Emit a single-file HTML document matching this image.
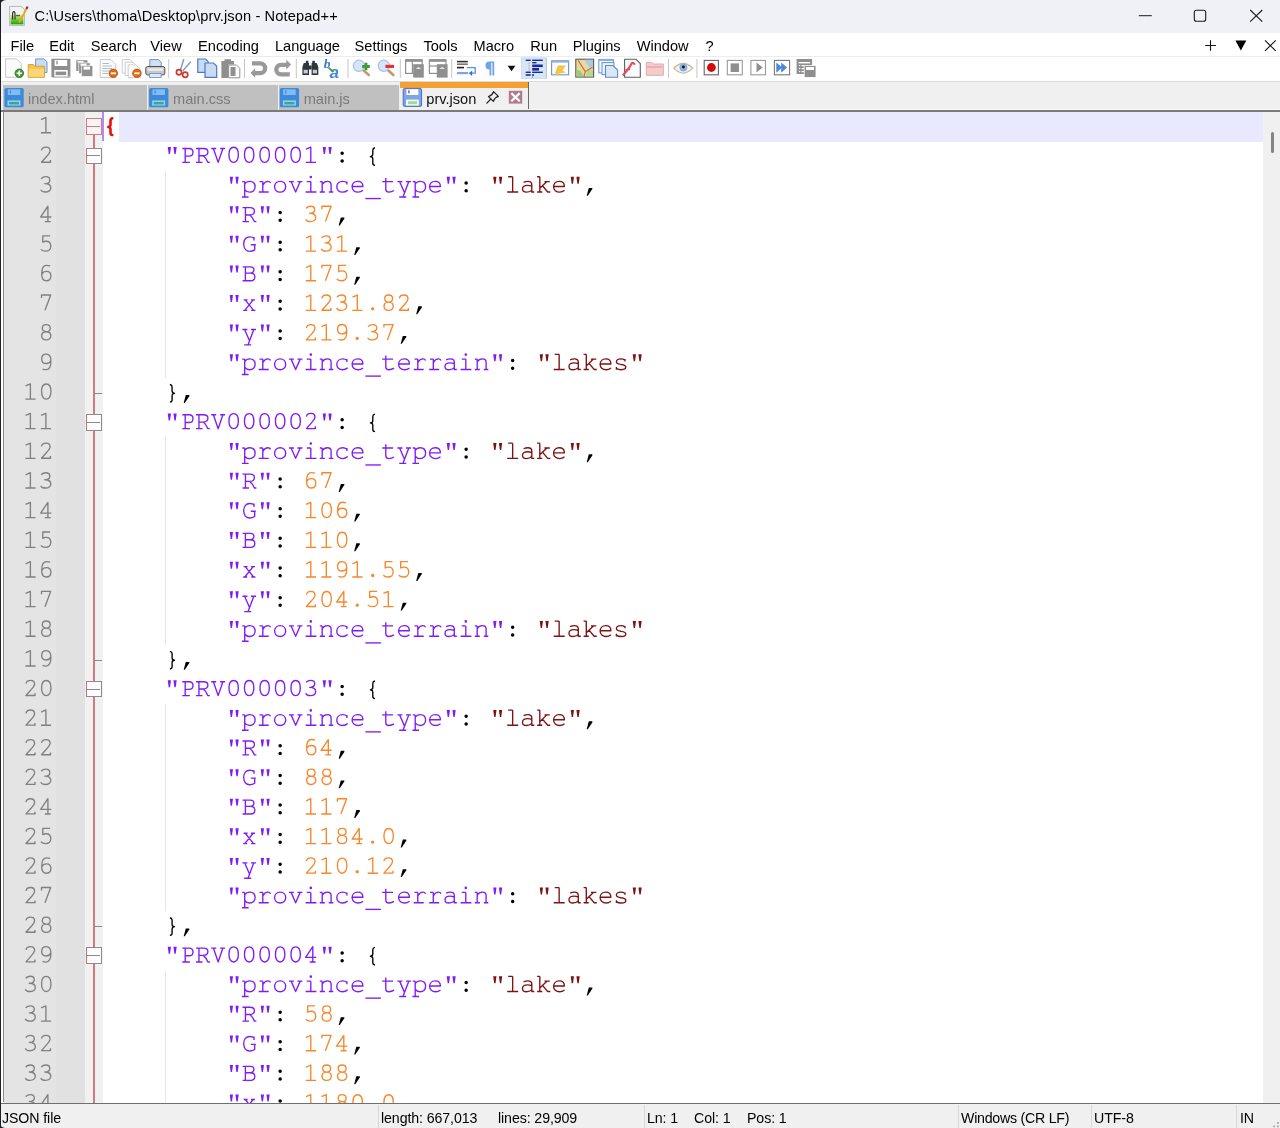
<!DOCTYPE html>
<html><head><meta charset="utf-8">
<style>
html,body{margin:0;padding:0;width:1280px;height:1128px;overflow:hidden;background:#fff;}
body{position:relative;font-family:"Liberation Sans",sans-serif;}
.a{position:absolute;}
#title{left:0;top:0;width:1280px;height:32.6px;background:#eff1f6;border-top-left-radius:6px;}
#ttext{filter:blur(0.25px);left:34.5px;top:8.2px;font-size:14.6px;letter-spacing:0.12px;color:#000;white-space:nowrap;}
#menubar{left:0;top:33px;width:1280px;height:24px;background:#fff;}
.mi{position:absolute;filter:blur(0.25px);top:38px;font-size:14.6px;color:#000;white-space:nowrap;}
#toolbar{left:0;top:57px;width:1280px;height:24px;background:#fff;}
#tabbar{left:0;top:81px;width:1280px;height:30px;background:#f0f0f0;}
.tab{position:absolute;top:85px;height:25px;background:#c0c0c0;}
.tt{position:absolute;filter:blur(0.25px);top:91px;font-size:14.6px;color:#7a7a7a;white-space:nowrap;}
#edtop{left:0;top:110px;width:1280px;height:2px;background:#7a7a7a;}
#editor{left:0;top:112px;width:1263px;height:991px;background:#fff;overflow:hidden;}
#lnm{left:3.7px;top:112px;width:52px;height:991px;background:#e4e4e4;}
#sym{left:55.7px;top:112px;width:30px;height:991px;background:#e1e1e1;}
#fold{left:85px;top:112px;width:17.5px;height:991px;background:#f1f1f1;}
#curline{left:118.5px;top:112px;width:1144.5px;height:29.5px;background:#e8e8ff;}
#scroll{left:1263px;top:112px;width:17px;height:991px;background:#f0f0f0;}
#edbot{left:0;top:1102.6px;width:1280px;height:1.4px;background:#707070;}
#status{left:0;top:1104px;width:1280px;height:24px;background:#f0f0f0;border-bottom-left-radius:5px;}
.st{position:absolute;filter:blur(0.25px);top:1110px;font-size:14.2px;color:#000;letter-spacing:-0.1px;white-space:nowrap;}
#lborder{left:0;top:0;width:1.3px;height:1128px;background:#1e2226;}


</style></head><body>
<div class="a" style="left:0;top:0;width:8px;height:8px;background:#1e2226"></div>
<div class="a" id="title"></div>
<div class="a" id="ttext">C:\Users\thoma\Desktop\prv.json - Notepad++</div>
<div class="a" id="menubar"></div>
<div class="mi" style="left:10.5px">File</div><div class="mi" style="left:49.2px">Edit</div><div class="mi" style="left:90.7px">Search</div><div class="mi" style="left:150.3px">View</div><div class="mi" style="left:198.1px">Encoding</div><div class="mi" style="left:275.0px">Language</div><div class="mi" style="left:354.6px">Settings</div><div class="mi" style="left:423.4px">Tools</div><div class="mi" style="left:473.5px">Macro</div><div class="mi" style="left:530.3px">Run</div><div class="mi" style="left:572.7px">Plugins</div><div class="mi" style="left:636.7px">Window</div><div class="mi" style="left:705.6px">?</div>
<div class="a" id="toolbar"></div>
<div class="a" id="tabbar"></div>
<div class="a" style="left:0;top:80.6px;width:1280px;height:1px;background:#dadada"></div>
<div class="a" style="left:0;top:56px;width:1280px;height:1px;background:#ececec"></div>
<div class="tab" style="left:3px;width:143.5px"></div>
<div class="tab" style="left:148px;width:129.5px"></div>
<div class="tab" style="left:278.5px;width:120.5px"></div>
<div class="tt" style="left:28px">index.html</div>
<div class="tt" style="left:173px">main.css</div>
<div class="tt" style="left:303.7px">main.js</div>
<div class="a" style="left:400px;top:82px;width:128px;height:28px;background:#f0f0f0;"></div>
<div class="a" style="left:400px;top:82px;width:128px;height:5.6px;background:#f5a033;"></div>
<div class="a" style="left:528px;top:82px;width:1px;height:28px;background:#696969;"></div>
<div class="tt" style="left:426.3px;color:#111">prv.json</div>
<svg class="a" style="left:0;top:0;filter:blur(0.3px)" width="1280" height="112" viewBox="0 0 1280 112">
<!-- app icon -->
<defs><linearGradient id="appg" x1="0" y1="0" x2="0" y2="1"><stop offset="0" stop-color="#d8f0a0"/><stop offset="0.45" stop-color="#80d040"/><stop offset="1" stop-color="#20a010"/></linearGradient></defs>
<path d="M9.6,6.4 H21.4 L24.4,9.4 V25.4 H9.6 Z" fill="#f2f4f2" stroke="#b4b8b4" stroke-width="1"/>
<rect x="10.6" y="14.5" width="12.8" height="9.9" fill="url(#appg)"/>
<path d="M12.6,19.5 V14 Q12.6,11.6 13.8,11.6 Q15,11.6 15,14 V19.5" fill="none" stroke="#2a2a2a" stroke-width="1.1"/>
<circle cx="17" cy="15.6" r="0.8" fill="#2a2a2a"/><circle cx="19" cy="15.6" r="0.8" fill="#2a2a2a"/>
<path d="M19.2,22.6 L27.2,7.4" stroke="#e8a818" stroke-width="2"/>
<path d="M26.4,8.9 L27.6,6.6" stroke="#8a4040" stroke-width="2.1"/>
<!-- 1 new -->
<path d="M5.6,58.8 H16.6 L21.3,63.5 V77.3 H5.6 Z" fill="#fbfbfb" stroke="#c9c9c9" stroke-width="1"/>
<circle cx="19.3" cy="73.3" r="4.3" fill="#3f9a32" stroke="#2e6e26" stroke-width="0.8"/>
<path d="M19.3,70.6 V76 M16.6,73.3 H22" stroke="#fff" stroke-width="1.6"/>
<!-- 2 open -->
<path d="M35.6,58.9 H44 L47,61.9 V72.5 H35.6 Z" fill="#c9dcf6" stroke="#7196cc" stroke-width="1"/>
<path d="M28.2,64.6 H33.4 L34.8,66.2 H44.4 V77.3 H28.2 Z" fill="#f7c451" stroke="#d8a238" stroke-width="1"/>
<path d="M28.7,68.8 H44 V76.8 H28.7 Z" fill="#fcd676"/>
<!-- 3 save -->
<path d="M51.4,58.8 H70.4 V77.4 H52.6 L51.4,76.2 Z" fill="#8e8e8e"/>
<rect x="54.6" y="60" width="12.6" height="6" fill="#fff"/>
<rect x="56.3" y="60.9" width="1.3" height="3.5" fill="#8e8e8e"/>
<rect x="54.3" y="70" width="13.4" height="6.6" fill="#fff"/>
<rect x="55.6" y="71.6" width="10.6" height="3.5" fill="#8e8e8e"/>
<rect x="68.6" y="75.8" width="0.9" height="0.9" fill="#fff"/>
<!-- 4 save all -->
<rect x="76.2" y="60.2" width="11.3" height="10.8" fill="#929292"/>
<rect x="78.8" y="62.9" width="11.3" height="10.8" fill="#929292" stroke="#fff" stroke-width="0.6"/>
<rect x="81.5" y="65.6" width="11.3" height="10.8" fill="#929292" stroke="#fff" stroke-width="0.6"/>
<rect x="77.5" y="61" width="6" height="1.5" fill="#fff"/>
<rect x="80.5" y="63.6" width="6" height="2" fill="#fff"/>
<rect x="83.5" y="66.6" width="6.5" height="3" fill="#fff"/>
<!-- 5 close -->
<path d="M100.2,59.6 H111 L115.8,64.4 V77.4 H100.2 Z" fill="#fcfcfc" stroke="#c9c9c9" stroke-width="1"/>
<path d="M102.5,63.5 H109 M102.5,66 H112 M102.5,68.5 H112 M102.5,71 H110 M102.5,73.5 H108" stroke="#9fb3c8" stroke-width="0.9"/>
<circle cx="113.3" cy="73.3" r="4.3" fill="#e26a12" stroke="#b04a0c" stroke-width="0.7"/>
<path d="M110.7,73.3 H115.9" stroke="#fff" stroke-width="1.8"/>
<!-- 6 close all -->
<path d="M122.2,59.5 H130 L132.5,62 V73 H122.2 Z" fill="#fdfdfd" stroke="#c9c9c9" stroke-width="0.9"/>
<path d="M125.2,62.2 H133 L135.5,64.7 V75.5 H125.2 Z" fill="#fdfdfd" stroke="#c9c9c9" stroke-width="0.9"/>
<path d="M128.2,64.9 H136 L140.6,69.5 V77.5 H128.2 Z" fill="#fdfdfd" stroke="#c9c9c9" stroke-width="0.9"/>
<circle cx="136.9" cy="73.3" r="4.3" fill="#e26a12" stroke="#b04a0c" stroke-width="0.7"/>
<path d="M134.3,73.3 H139.5" stroke="#fff" stroke-width="1.8"/>
<!-- 7 print -->
<path d="M149.8,59.6 H158.5 L161.2,62.3 V67 H149.8 Z" fill="#cfe0f6" stroke="#7196cc" stroke-width="1"/>
<rect x="145.8" y="66.5" width="19" height="8.5" rx="2" fill="#c9c9c9" stroke="#4f4f4f" stroke-width="1"/>
<rect x="147.5" y="68.5" width="15.6" height="2.2" fill="#eeeeee"/>
<rect x="149.5" y="73.5" width="11.6" height="4" fill="#dfe9f6" stroke="#7196cc" stroke-width="0.9"/>
<!-- separators -->
<g fill="#c6c6c6">
<rect x="168.2" y="59" width="1" height="19"/>
<rect x="244" y="59" width="1" height="19"/>
<rect x="295.8" y="59" width="1" height="19"/>
<rect x="347.5" y="59" width="1" height="19"/>
<rect x="399.8" y="59" width="1" height="19"/>
<rect x="451.2" y="59" width="1" height="19"/>
<rect x="668" y="59" width="1" height="19"/>
<rect x="696.4" y="59" width="1" height="19"/>
</g>
<!-- 8 cut -->
<path d="M180.6,69.5 L183.8,59" stroke="#8aa2c4" stroke-width="1.6"/>
<path d="M182.8,70.8 L190.8,61.8" stroke="#8aa2c4" stroke-width="1.6"/>
<circle cx="179" cy="72.2" r="2.6" fill="none" stroke="#cf3a30" stroke-width="1.7"/>
<circle cx="185.2" cy="74.8" r="2.6" fill="none" stroke="#cf3a30" stroke-width="1.7"/>
<!-- 9 copy -->
<path d="M197.8,59 H205.5 L208.2,61.7 V72.3 H197.8 Z" fill="#cadcf5" stroke="#4e78c2" stroke-width="1.2"/>
<path d="M205,63 H213.5 L216.7,66.2 V77.3 H205 Z" fill="#cadcf5" stroke="#4e78c2" stroke-width="1.2"/>
<!-- 10 paste -->
<path d="M221.4,61 H224.5 V59.2 H231 V61 H234 V64.5 H228.4 V78 H221.4 Z" fill="#8f8f8f"/>
<path d="M228.6,65 H236.5 L239.8,68.3 V77.8 H228.6 Z" fill="#fff" stroke="#8f8f8f" stroke-width="1"/>
<rect x="230.5" y="67" width="5" height="9" fill="#8f8f8f"/>
<!-- 11 undo -->
<path d="M251.9,63.35 H260.25 A4.85,4.85 0 0 1 260.25,73.05 H254" fill="none" stroke="#999" stroke-width="4.3"/>
<path d="M250.5,73.1 L255.2,68.3 V77.7 Z" fill="#999"/>
<!-- 12 redo -->
<path d="M289.8,74.35 H281.05 A4.75,4.75 0 0 1 281.05,64.85 H287.2" fill="none" stroke="#999" stroke-width="4.3"/>
<path d="M291.1,64.6 L286.3,59.8 V69.4 Z" fill="#999"/>
<!-- 13 find -->
<path d="M303.8,63 H309 V75 H302.4 V67 Z M311.6,63 H316.8 L318.3,67 V75 H311.6 Z" fill="#2e3640"/>
<rect x="305.8" y="60.8" width="2.6" height="3" fill="#2e3640"/><rect x="312.3" y="60.8" width="2.6" height="3" fill="#2e3640"/>
<rect x="309" y="65.5" width="2.6" height="4" fill="#2e3640"/>
<rect x="303.6" y="69.8" width="4.2" height="3.6" fill="#c8ccd2"/><rect x="312.8" y="69.8" width="4.2" height="3.6" fill="#c8ccd2"/>
<!-- 14 replace -->
<text x="323.8" y="68.2" font-family="Liberation Serif" font-style="italic" font-weight="bold" font-size="13.5" fill="#3a78d4">b</text>
<text x="329.6" y="77.6" font-family="Liberation Sans" font-style="italic" font-weight="bold" font-size="17" fill="#4a88e0">a</text>
<path d="M328.6,67.6 L333.4,72.2" stroke="#38a040" stroke-width="1.8"/>
<!-- 15 zoom in -->
<path d="M362.5,69.5 L368.8,75" stroke="#c9976a" stroke-width="2.6" stroke-linecap="round"/>
<circle cx="359" cy="65.8" r="5.6" fill="#d6e6f8" stroke="#a9c2e4" stroke-width="1.2"/>
<path d="M366,62.7 V70.3 M362.2,66.5 H369.8" stroke="#3f9a3a" stroke-width="2.8"/>
<!-- 16 zoom out -->
<path d="M387.3,69.5 L393.3,75" stroke="#c9976a" stroke-width="2.6" stroke-linecap="round"/>
<circle cx="383.8" cy="65.8" r="5.6" fill="#d6e6f8" stroke="#a9c2e4" stroke-width="1.2"/>
<rect x="385.4" y="64.8" width="8.6" height="3.2" fill="#e0323e"/>
<!-- 17 sync v -->
<rect x="405.6" y="59.8" width="16.6" height="13.6" fill="#fff" stroke="#8f8f8f" stroke-width="1.2"/>
<rect x="405.6" y="59.4" width="16.6" height="2.4" fill="#8f8f8f"/>
<rect x="411.8" y="60" width="1.2" height="13" fill="#8f8f8f"/>
<rect x="413.2" y="64.2" width="10.6" height="13.4" fill="#8f8f8f"/>
<path d="M415.8,68.8 Q418.5,65.8 421.2,68.8 Z" fill="#fff"/>
<!-- 18 sync h -->
<rect x="429.4" y="59.8" width="16.6" height="13.6" fill="#fff" stroke="#8f8f8f" stroke-width="1.2"/>
<rect x="429.4" y="59.4" width="16.6" height="2.4" fill="#8f8f8f"/>
<rect x="430" y="65.4" width="16" height="1.2" fill="#8f8f8f"/>
<rect x="436.8" y="64.2" width="10.8" height="13.4" fill="#8f8f8f"/>
<path d="M439.5,68.8 Q442.2,65.8 444.9,68.8 Z" fill="#fff"/>
<!-- 19 wrap -->
<rect x="457" y="60.8" width="10.8" height="1.6" fill="#333"/>
<rect x="457" y="63.4" width="10.8" height="1.6" fill="#777"/>
<rect x="457" y="66.8" width="7" height="1.6" fill="#222"/>
<rect x="457" y="72" width="11" height="2.2" fill="#7aa6e6"/>
<path d="M467,67.6 H475.2 V73.2 H471" fill="none" stroke="#5b8fd8" stroke-width="1.3"/>
<path d="M468.6,73.2 L472.2,70.4 V76 Z" fill="#3a74cc"/>
<!-- 20 pilcrow -->
<path d="M489.5,61.4 H494.2 V75.6 H492.4 V63 H491.3 V75.6 H489.5 V69.5 A4,4 0 0 1 489.5,61.4 Z" fill="#6ea4e8"/>
<!-- 21 dropdown -->
<path d="M507.6,65.8 H515.4 L511.5,71.2 Z" fill="#111"/>
<!-- 22 indent guide pressed -->
<rect x="521.3" y="57.8" width="24.8" height="20.8" fill="#d6e7fa" stroke="#c2d8f2" stroke-width="0.8"/>
<rect x="546" y="58.5" width="1" height="19.5" fill="#c6c6c6"/>
<g fill="#1c2aa0">
<rect x="525.7" y="59.6" width="5" height="1.4"/><rect x="532.2" y="59.6" width="10.6" height="1.4"/>
<rect x="532.2" y="62" width="4.3" height="1.4"/>
<rect x="532.2" y="64.5" width="10.6" height="2.6"/>
<rect x="532.2" y="68" width="6.8" height="2.6"/>
<rect x="525.7" y="71.6" width="5" height="1.4"/><rect x="532.2" y="71.6" width="10.6" height="1.4"/>
<rect x="525.7" y="74.2" width="5" height="1.6"/><rect x="532.2" y="74.2" width="1.8" height="1.6"/>
<rect x="532.2" y="76.6" width="0.9" height="0.9"/>
</g>
<path d="M529,62.5 V71" stroke="#d08080" stroke-width="1" stroke-dasharray="1.2,1.2"/>
<!-- 23 next -->
<rect x="551.6" y="60.8" width="17" height="14" fill="#fafcff" stroke="#6c92cc" stroke-width="1.1"/>
<rect x="551.6" y="60.6" width="17" height="2" fill="#8fb0e0"/>
<path d="M555,73 L558,65.5 H566 L562.5,70.5 L566,72.5 L559,73.5 L557.5,76 Z" fill="#f2c640"/>
<!-- 24 doc map -->
<rect x="575.8" y="59.2" width="17.8" height="17.9" fill="#e4dc9c" stroke="#5a5a5a" stroke-width="1.1"/>
<path d="M584.5,59.8 H593 V69 L589,67 Z" fill="#a9c9e6"/>
<path d="M576.4,69.5 L581,71 L583.5,76.6 H576.4 Z" fill="#9ccc78"/>
<path d="M587,71 L593,70 V76.6 H586 Z" fill="#b8d890"/>
<path d="M578.2,60.4 L585.2,71.6 L584,76.4 M585.2,71.6 L592.4,67.6" stroke="#d86a48" stroke-width="1.2" fill="none"/>
<!-- 25 doc list -->
<rect x="598.8" y="59.4" width="14.5" height="13.5" fill="#f4f8fe" stroke="#6c92cc" stroke-width="1"/>
<rect x="598.8" y="59.2" width="14.5" height="1.8" fill="#8fb0e0"/>
<rect x="602" y="62.6" width="12" height="12" fill="#eef4fc" stroke="#6c92cc" stroke-width="1"/>
<path d="M605.5,65.5 H613 L617.6,70 V77.3 H605.5 Z" fill="#dbe7f8" stroke="#5f89c8" stroke-width="1.1"/>
<!-- 26 function list -->
<path d="M624.6,59.3 H636 L640.3,63.6 V77.2 H624.6 Z" fill="#fcfcfc" stroke="#5f5f5f" stroke-width="1.1"/>
<path d="M622.8,75.5 L629,68 L631.8,63.2 A1.5,1.5 0 0 1 634.2,64.8" fill="none" stroke="#e05060" stroke-width="2.2"/>
<path d="M625.5,69.5 H630" stroke="#e05060" stroke-width="1.4"/>
<!-- 27 folder ws -->
<path d="M646.3,62.5 H651.5 L653,64 H663.3 V75.3 H646.3 Z" fill="#f4cccc" stroke="#e4a8a8" stroke-width="1"/>
<rect x="647.3" y="66" width="15" height="2" fill="#eab0b0"/>
<!-- 28 eye -->
<path d="M673.8,68.2 Q683.2,58.5 692.6,68.2 Q683.2,78 673.8,68.2 Z" fill="#f4f6fa" stroke="#c8b890" stroke-width="1.2"/>
<circle cx="683.4" cy="67.4" r="4" fill="#8ab0dc"/>
<circle cx="683.4" cy="67" r="1.4" fill="#111"/>
<!-- 29 record -->
<rect x="704.2" y="60.4" width="14.2" height="14.4" fill="#fff" stroke="#666" stroke-width="1.1"/>
<circle cx="711.4" cy="67.5" r="4.4" fill="#d80808"/>
<!-- 30 stop -->
<rect x="727.3" y="60.4" width="15" height="14.4" fill="#fff" stroke="#999" stroke-width="1.1"/>
<rect x="730.6" y="63.4" width="8.4" height="8.6" fill="#8f8f8f"/>
<!-- 31 play -->
<rect x="750.9" y="60.4" width="14.6" height="14.4" fill="#fff" stroke="#999" stroke-width="1.1"/>
<path d="M756.5,62.4 L762.7,67.5 L756.5,72.6 Z" fill="#8f8f8f"/>
<!-- 32 run multi -->
<rect x="774.4" y="60.4" width="15.2" height="14.4" fill="#fff" stroke="#777" stroke-width="1.1"/>
<path d="M776.3,62.4 L782,67.5 L776.3,72.7 Z M781.2,62.4 L787,67.5 L781.2,72.7 Z" fill="#4a86e0"/>
<!-- 33 save macro -->
<rect x="796.6" y="59" width="15.5" height="15" fill="#8f8f8f"/>
<rect x="798.6" y="62" width="11.5" height="1.4" fill="#fff"/>
<g fill="#fff"><rect x="799" y="65" width="1.2" height="1.2"/><rect x="799" y="68" width="1.2" height="1.2"/><rect x="799" y="71" width="1.2" height="1.2"/>
<rect x="801.5" y="65" width="2.5" height="1.2"/><rect x="801.5" y="68" width="2.5" height="1.2"/><rect x="801.5" y="71" width="2.5" height="1.2"/></g>
<rect x="804.2" y="65.6" width="11.8" height="11.8" fill="#8f8f8f" stroke="#fff" stroke-width="0.8"/>
<rect x="806" y="67" width="8" height="3" fill="#fff"/>
<!-- tab icons -->
<g id="fl">
<rect x="4.4" y="88" width="19.3" height="19.3" rx="1.6" fill="#3e8ad9"/>
<rect x="7.8" y="89.3" width="12.5" height="5.7" fill="#80bdf5"/>
<rect x="9.8" y="90.3" width="1.2" height="3.3" fill="#3e8ad9"/>
<rect x="7.5" y="100.4" width="13" height="5.2" fill="#8fd0f0"/>
<rect x="9" y="102" width="10" height="2.4" fill="#3aa890"/>
</g>
<use href="#fl" x="144.7"/>
<use href="#fl" x="275.4"/>
<rect x="403.2" y="88.4" width="18.4" height="18" rx="1.4" fill="#7ca4e6" stroke="#4a74b8" stroke-width="1"/>
<rect x="406.4" y="89.2" width="12" height="5.8" fill="#fdfdfd"/>
<rect x="408.3" y="90.2" width="1.2" height="3.2" fill="#555"/>
<rect x="406" y="99.6" width="12.8" height="6" fill="#f4fbf4"/>
<rect x="408" y="101.2" width="9" height="3" fill="#a6d890"/>
<!-- pin -->
<path d="M493.5,91.6 L498.4,96.4 Q494.6,97.4 493.4,101.4 L488.5,96.6 Q492.4,95.4 493.5,91.6 Z" stroke="#222" stroke-width="1.25" fill="none" stroke-linejoin="round"/>
<path d="M490.7,99.1 L486.9,103.1" stroke="#222" stroke-width="1.3" stroke-linecap="round"/>
<!-- close x -->
<rect x="508.8" y="90.8" width="13.4" height="12.8" fill="#b3798c"/>
<path d="M511.3,93.1 L519.7,101.3 M519.7,93.1 L511.3,101.3" stroke="#fff" stroke-width="2.2"/>
<!-- window controls -->
<rect x="1138.8" y="15.2" width="13" height="1" fill="#1a1a1a"/>
<rect x="1194.3" y="10.3" width="11.4" height="11" rx="2" fill="none" stroke="#1a1a1a" stroke-width="1.1"/>
<path d="M1250.2,10 L1262.3,21.7 M1262.3,10 L1250.2,21.7" stroke="#1a1a1a" stroke-width="1.1"/>
<!-- menu right -->
<path d="M1210.5,40.3 V50.7 M1205.2,45.5 H1215.9" stroke="#111" stroke-width="1.1"/>
<path d="M1235.4,40.6 H1246.3 L1240.85,50.4 Z" fill="#000"/>
<path d="M1265,40.4 L1275.7,50.8 M1275.7,40.4 L1265,50.8" stroke="#111" stroke-width="1.1"/>
</svg>

<div class="a" style="left:528px;top:108.8px;width:752px;height:1.2px;background:#fafafa"></div>
<div class="a" id="edtop"></div>
<div class="a" id="editor"></div>
<div class="a" id="lnm"></div>
<div class="a" id="sym"></div>
<div class="a" id="fold"></div>
<div class="a" id="curline"></div>
<div class="a" id="scroll"></div>
<div class="a" style="left:1271px;top:132.3px;width:3px;height:20.5px;background:#858585;border-radius:2px;"></div>
<div class="a" style="left:0;top:112px;width:1263px;height:990.5px;overflow:hidden;">
<div style="position:relative;top:-112px;">
<div class="a" style="left:93.4px;top:134.5px;width:1.2px;height:980px;background:#d47880"></div>
<div class="a" style="left:85.5px;top:118.12px;width:14.5px;height:14.5px;border:1px solid #d47a80;background:#fbf4f4"></div>
<div class="a" style="left:87px;top:125.72px;width:13px;height:1.2px;background:#d47a80"></div>
<div class="a" style="left:85.5px;top:147.71px;width:14.5px;height:14.5px;border:1px solid #8c8c8c;border-left-color:#c87078;background:#fcfcfc"></div>
<div class="a" style="left:87px;top:155.31px;width:13px;height:1.2px;background:#8a8a8a"></div>
<div class="a" style="left:85.5px;top:414.04px;width:14.5px;height:14.5px;border:1px solid #8c8c8c;border-left-color:#c87078;background:#fcfcfc"></div>
<div class="a" style="left:87px;top:421.64px;width:13px;height:1.2px;background:#8a8a8a"></div>
<div class="a" style="left:85.5px;top:680.97px;width:14.5px;height:14.5px;border:1px solid #8c8c8c;border-left-color:#c87078;background:#fcfcfc"></div>
<div class="a" style="left:87px;top:688.57px;width:13px;height:1.2px;background:#8a8a8a"></div>
<div class="a" style="left:85.5px;top:947.31px;width:14.5px;height:14.5px;border:1px solid #8c8c8c;border-left-color:#c87078;background:#fcfcfc"></div>
<div class="a" style="left:87px;top:954.91px;width:13px;height:1.2px;background:#8a8a8a"></div>
<div class="a" style="left:94px;top:392.80px;width:8px;height:1px;background:#8a8a8a"></div>
<div class="a" style="left:94px;top:659.66px;width:8px;height:1px;background:#8a8a8a"></div>
<div class="a" style="left:94px;top:926.08px;width:8px;height:1px;background:#8a8a8a"></div>
<div class="a" style="left:165px;top:170.95px;width:1px;height:207.15px;background:#e6e6e6"></div>
<div class="a" style="left:165px;top:437.35px;width:1px;height:207.55px;background:#e6e6e6"></div>
<div class="a" style="left:165px;top:704.28px;width:1px;height:207.11px;background:#e6e6e6"></div>
<div class="a" style="left:165px;top:970.54px;width:1px;height:325.45px;background:#e6e6e6"></div>
<div class="a" style="left:102px;top:112px;width:1.6px;height:29px;background:#b48cf0"></div>
<svg class="a" style="left:0;top:0;filter:blur(0.3px)" width="1263" height="1103" viewBox="0 0 1263 1103"><defs><path id="c1" d="M10.4,-14.4 C9.3,-14.1 8.6,-13.4 8.6,-12.0 V-8.3 C8.6,-6.9 7.9,-6.0 6.4,-5.8 C7.9,-5.6 8.6,-4.7 8.6,-3.3 V0.2 C8.6,1.5 9.3,2.1 10.4,2.3" fill="none"/><path id="c34" d="M3.8,-15.3 L7.1,-15.3 L6.1,-8.3 L4.8,-8.3 Z M9.5,-15.3 L12.8,-15.3 L11.8,-8.3 L10.5,-8.3 Z" stroke="none"/><path id="c44" d="M6.4,-4.0 L9.7,-4.0 Q10.3,-3.6 9.9,-2.9 L5.4,3.9 L4.3,3.9 Z" stroke="none"/><path id="c46" d="M5.65,-1.50 a1.65,1.65 0 1 0 3.30,0 a1.65,1.65 0 1 0 -3.30,0 Z" stroke="none"/><path id="c48" d="M7.75,-15.1 C10.6,-15.1 12.45,-12.2 12.45,-7.55 C12.45,-2.9 10.6,0 7.75,0 C4.9,0 3.05,-2.9 3.05,-7.55 C3.05,-12.2 4.9,-15.1 7.75,-15.1 Z" fill="none"/><path id="c49" d="M2.4,0 H12.6 M7.4,0 V-15.3 L2.6,-13.2" fill="none"/><path id="c50" d="M3.0,-12.0 C3.3,-13.9 5.3,-15.3 7.4,-15.3 C9.9,-15.3 11.6,-13.8 11.6,-11.6 C11.6,-9.0 9.2,-7.3 3.0,-0.1 H12.0 V-2.4" fill="none"/><path id="c51" d="M2.8,-13.1 C3.6,-14.7 5.4,-15.3 7.3,-15.3 C9.8,-15.3 11.3,-13.9 11.3,-11.8 C11.3,-9.6 9.5,-8.3 6.3,-8.3 C10.0,-8.3 12.3,-6.6 12.3,-4.1 C12.3,-1.4 10.0,0 7.0,0 C4.8,0 3.0,-0.7 2.2,-2.2" fill="none"/><path id="c52" d="M9.4,0 V-15.3 L2.2,-4.6 H12.8 M6.3,0 H12.2" fill="none"/><path id="c53" d="M11.6,-15.3 H4.3 V-9.0 C5.3,-9.6 6.5,-9.9 7.7,-9.9 C10.4,-9.9 12.3,-8.0 12.3,-5.0 C12.3,-1.9 10.2,0 7.2,0 C5.2,0 3.5,-0.6 2.4,-1.8" fill="none"/><path id="c54" d="M11.6,-14.8 C10.3,-15.3 9.0,-15.4 8.0,-15.4 C4.8,-15.4 3.2,-12.0 3.2,-6.8 C3.2,-2.5 5.0,0 7.8,0 C10.6,0 12.4,-2.0 12.4,-4.8 C12.4,-7.6 10.6,-9.4 8.0,-9.4 C5.8,-9.4 4.1,-8.2 3.3,-6.6" fill="none"/><path id="c55" d="M3.0,-12.4 V-15.3 H12.2 L6.5,0" fill="none"/><path id="c56" d="M7.75,-15.3 C10.1,-15.3 11.7,-13.9 11.7,-11.75 C11.7,-9.6 10.1,-8.2 7.75,-8.2 C5.4,-8.2 3.8,-9.6 3.8,-11.75 C3.8,-13.9 5.4,-15.3 7.75,-15.3 Z M7.75,-8.2 C10.6,-8.2 12.35,-6.6 12.35,-4.1 C12.35,-1.6 10.6,0 7.75,0 C4.9,0 3.15,-1.6 3.15,-4.1 C3.15,-6.6 4.9,-8.2 7.75,-8.2 Z" fill="none"/><path id="c57" d="M4.0,-0.5 C5.3,0 6.6,0.1 7.6,0.1 C10.8,0.1 12.4,-3.4 12.4,-8.6 C12.4,-12.9 10.6,-15.4 7.8,-15.4 C5.0,-15.4 3.2,-13.4 3.2,-10.6 C3.2,-7.8 5.0,-6.0 7.6,-6.0 C9.8,-6.0 11.5,-7.2 12.3,-8.8" fill="none"/><path id="c58" d="M6.00,-9.00 a1.75,1.75 0 1 0 3.50,0 a1.75,1.75 0 1 0 -3.50,0 Z M6.00,-1.30 a1.75,1.75 0 1 0 3.50,0 a1.75,1.75 0 1 0 -3.50,0 Z" stroke="none"/><path id="c66" d="M4.0,-13.9 V0 M1.2,-13.9 H9.0 C11.3,-13.9 12.5,-12.9 12.5,-11.0 C12.5,-9.0 11.0,-7.6 8.8,-7.6 H4.0 M8.8,-7.6 C11.8,-7.6 13.5,-6.0 13.5,-3.8 C13.5,-1.4 11.8,0 9.2,0 H1.2" fill="none"/><path id="c71" d="M12.6,-10.6 V-14.2 M12.6,-12.9 C11.5,-14.1 9.9,-14.2 8.3,-14.2 C4.7,-14.2 2.3,-11.6 2.3,-7.1 C2.3,-2.6 4.7,0.3 8.4,0.3 C10.1,0.3 11.9,-0.3 13.3,-1.2 V-6.4 M9.4,-6.4 H14.4" fill="none"/><path id="c80" d="M5.8,-13.9 V0 M2.9,-13.9 H9.6 C12.2,-13.9 13.6,-12.3 13.6,-10.05 C13.6,-7.8 12.0,-6.2 9.4,-6.2 H5.8 M2.9,0 H10.5" fill="none"/><path id="c82" d="M4.05,-13.9 V0 M1.1,-13.9 H8.6 C11.5,-13.9 13.0,-12.6 13.0,-10.4 C13.0,-8.0 11.2,-6.6 8.4,-6.6 H4.05 M8.4,-6.6 C10.2,-5.2 12.0,-2.4 13.0,0 H15.0 M1.1,0 H7.6" fill="none"/><path id="c86" d="M0.8,-13.9 H5.8 M9.7,-13.9 H14.7 M3.0,-13.9 L7.75,0 L12.5,-13.9" fill="none"/><path id="c95" d="M0,6.6 H15.5" fill="none"/><path id="c97" d="M3.2,-9.6 C4.6,-10.3 6.2,-10.6 7.6,-10.6 C10.2,-10.6 11.4,-9.4 11.4,-7.2 V0 H13.9 M11.4,-5.8 C9.7,-6.4 8.4,-6.6 7.1,-6.6 C3.9,-6.6 2.1,-5.2 2.1,-3.1 C2.1,-1.0 3.7,0.2 6.0,0.2 C8.2,0.2 10.0,-0.6 11.4,-1.8" fill="none"/><path id="c99" d="M12.5,-10.4 V-7.4 M12.5,-9.2 C11.3,-10.2 9.9,-10.6 8.3,-10.6 C4.9,-10.6 2.4,-8.4 2.4,-5.1 C2.4,-1.9 4.7,0.2 8.1,0.2 C10.0,0.2 11.8,-0.4 13.3,-1.8" fill="none"/><path id="c101" d="M2.2,-5.5 H13.0 C13.0,-8.7 10.8,-10.6 7.8,-10.6 C4.5,-10.6 2.2,-8.4 2.2,-5.2 C2.2,-1.9 4.7,0.2 8.2,0.2 C10.0,0.2 11.7,-0.4 13.1,-1.6" fill="none"/><path id="c105" d="M7.4,-10.4 V0 M3.4,-10.4 H7.4 M2.2,0 H13.0 M6.8,-14.9 a0.6,0.6 0 1 0 1.2,0 a0.6,0.6 0 1 0 -1.2,0 Z" fill="none"/><path id="c107" d="M3.9,-15.2 V0 M1.2,-15.2 H3.9 M1.2,0 H6.4 M3.9,-3.6 L11.0,-10.4 M6.6,-6.2 L11.8,0 H14.4 M8.6,-10.4 H13.9" fill="none"/><path id="c108" d="M7.75,-15.2 V0 M3.3,-15.2 H7.75 M2.3,0 H13.3" fill="none"/><path id="c110" d="M3.3,-10.4 V0 M0.9,-10.4 H3.3 M0.9,0 H6.0 M9.9,0 H14.4 M3.3,-7.6 C4.6,-9.7 6.6,-10.6 8.5,-10.6 C10.8,-10.6 12.2,-9.4 12.2,-7.2 V0" fill="none"/><path id="c111" d="M7.75,-10.6 C11.0,-10.6 13.3,-8.4 13.3,-5.2 C13.3,-2.0 11.0,0.2 7.75,0.2 C4.5,0.2 2.2,-2.0 2.2,-5.2 C2.2,-8.4 4.5,-10.6 7.75,-10.6 Z" fill="none"/><path id="c112" d="M3.3,-10.4 V5.0 M0.8,-10.4 H3.3 M3.3,-8.0 C4.5,-9.8 6.3,-10.6 8.3,-10.6 C11.6,-10.6 13.7,-8.4 13.7,-5.2 C13.7,-1.9 11.5,0.2 8.3,0.2 C6.3,0.2 4.5,-0.6 3.3,-2.3 M0.5,5.0 H7.2" fill="none"/><path id="c114" d="M5.9,-10.4 V0 M2.6,-10.4 H5.9 M1.8,0 H11.8 M5.9,-6.9 C7.2,-9.2 9.0,-10.6 11.0,-10.6 C12.1,-10.6 13.1,-10.2 13.7,-9.0" fill="none"/><path id="c115" d="M11.6,-10.4 V-8.0 M11.6,-9.4 C10.3,-10.3 8.9,-10.6 7.5,-10.6 C4.5,-10.6 3.0,-9.4 3.0,-7.8 C3.0,-5.7 5.5,-5.4 7.8,-5.0 C10.8,-4.6 12.4,-4.0 12.4,-2.4 C12.4,-0.7 10.6,0.2 7.8,0.2 C5.8,0.2 4.2,-0.3 3.0,-1.2 M3.0,0.2 V-2.6" fill="none"/><path id="c116" d="M4.9,-14.0 V-2.6 C4.9,-0.7 6.0,0.2 7.9,0.2 C9.9,0.2 11.7,-0.4 13.1,-1.4 M1.3,-10.4 H12.2" fill="none"/><path id="c118" d="M1.0,-10.4 H6.0 M9.5,-10.4 H14.5 M3.2,-10.4 L7.75,0 L12.3,-10.4" fill="none"/><path id="c120" d="M2.2,-10.4 H6.2 M9.6,-10.4 H13.6 M3.8,-10.4 L12.2,0 M11.8,-10.4 L3.4,0 M1.8,0 H5.8 M9.8,0 H14.0" fill="none"/><path id="c121" d="M1.0,-10.4 H6.0 M9.6,-10.4 H14.6 M3.2,-10.4 L8.0,0.6 M12.4,-10.4 L6.6,5.0 M2.8,5.0 H9.8" fill="none"/><path id="c123" d="M9.6,-14.6 C8.2,-14.3 7.4,-13.5 7.4,-12.2 V-8.0 C7.4,-6.6 6.7,-5.9 5.0,-5.75 C6.7,-5.6 7.4,-4.9 7.4,-3.5 V0.8 C7.4,2.1 8.2,2.8 9.6,3.0" fill="none"/><path id="c125" d="M6.0,-14.6 C7.4,-14.3 8.2,-13.5 8.2,-12.2 V-8.0 C8.2,-6.6 8.9,-5.9 10.6,-5.75 C8.9,-5.6 8.2,-4.9 8.2,-3.5 V0.8 C8.2,2.1 7.4,2.8 6.0,3.0" fill="none"/></defs>
<g stroke="#e41212" fill="#e41212" stroke-width="2.6" stroke-linejoin="round" stroke-linecap="round"><use href="#c1" x="101.90" y="132.77"/></g>
<g stroke="#808080" fill="#808080" stroke-width="1.35" stroke-linejoin="round"><use href="#c49" x="38.50" y="132.77"/><use href="#c50" x="38.50" y="162.36"/><use href="#c51" x="38.50" y="191.95"/><use href="#c52" x="38.50" y="221.55"/><use href="#c53" x="38.50" y="251.14"/><use href="#c54" x="38.50" y="280.73"/><use href="#c55" x="38.50" y="310.32"/><use href="#c56" x="38.50" y="339.91"/><use href="#c57" x="38.50" y="369.51"/><use href="#c49" x="23.00" y="399.10"/><use href="#c48" x="38.50" y="399.10"/><use href="#c49" x="23.00" y="428.69"/><use href="#c49" x="38.50" y="428.69"/><use href="#c49" x="23.00" y="458.35"/><use href="#c50" x="38.50" y="458.35"/><use href="#c49" x="23.00" y="488.01"/><use href="#c51" x="38.50" y="488.01"/><use href="#c49" x="23.00" y="517.67"/><use href="#c52" x="38.50" y="517.67"/><use href="#c49" x="23.00" y="547.33"/><use href="#c53" x="38.50" y="547.33"/><use href="#c49" x="23.00" y="576.99"/><use href="#c54" x="38.50" y="576.99"/><use href="#c49" x="23.00" y="606.64"/><use href="#c55" x="38.50" y="606.64"/><use href="#c49" x="23.00" y="636.30"/><use href="#c56" x="38.50" y="636.30"/><use href="#c49" x="23.00" y="665.96"/><use href="#c57" x="38.50" y="665.96"/><use href="#c50" x="23.00" y="695.62"/><use href="#c48" x="38.50" y="695.62"/><use href="#c50" x="23.00" y="725.28"/><use href="#c49" x="38.50" y="725.28"/><use href="#c50" x="23.00" y="754.87"/><use href="#c50" x="38.50" y="754.87"/><use href="#c50" x="23.00" y="784.45"/><use href="#c51" x="38.50" y="784.45"/><use href="#c50" x="23.00" y="814.03"/><use href="#c52" x="38.50" y="814.03"/><use href="#c50" x="23.00" y="843.62"/><use href="#c53" x="38.50" y="843.62"/><use href="#c50" x="23.00" y="873.20"/><use href="#c54" x="38.50" y="873.20"/><use href="#c50" x="23.00" y="902.79"/><use href="#c55" x="38.50" y="902.79"/><use href="#c50" x="23.00" y="932.38"/><use href="#c56" x="38.50" y="932.38"/><use href="#c50" x="23.00" y="961.96"/><use href="#c57" x="38.50" y="961.96"/><use href="#c51" x="23.00" y="991.54"/><use href="#c48" x="38.50" y="991.54"/><use href="#c51" x="23.00" y="1021.13"/><use href="#c49" x="38.50" y="1021.13"/><use href="#c51" x="23.00" y="1050.71"/><use href="#c50" x="38.50" y="1050.71"/><use href="#c51" x="23.00" y="1080.30"/><use href="#c51" x="38.50" y="1080.30"/><use href="#c51" x="23.00" y="1109.88"/><use href="#c52" x="38.50" y="1109.88"/></g>
<g stroke="#7f1cf6" fill="#7f1cf6" stroke-width="1.35" stroke-linejoin="round"><use href="#c34" x="163.90" y="162.36"/><use href="#c80" x="179.40" y="162.36"/><use href="#c82" x="194.90" y="162.36"/><use href="#c86" x="210.40" y="162.36"/><use href="#c48" x="225.90" y="162.36"/><use href="#c48" x="241.40" y="162.36"/><use href="#c48" x="256.90" y="162.36"/><use href="#c48" x="272.40" y="162.36"/><use href="#c48" x="287.90" y="162.36"/><use href="#c49" x="303.40" y="162.36"/><use href="#c34" x="318.90" y="162.36"/><use href="#c34" x="225.90" y="191.95"/><use href="#c112" x="241.40" y="191.95"/><use href="#c114" x="256.90" y="191.95"/><use href="#c111" x="272.40" y="191.95"/><use href="#c118" x="287.90" y="191.95"/><use href="#c105" x="303.40" y="191.95"/><use href="#c110" x="318.90" y="191.95"/><use href="#c99" x="334.40" y="191.95"/><use href="#c101" x="349.90" y="191.95"/><use href="#c95" x="365.40" y="191.95"/><use href="#c116" x="380.90" y="191.95"/><use href="#c121" x="396.40" y="191.95"/><use href="#c112" x="411.90" y="191.95"/><use href="#c101" x="427.40" y="191.95"/><use href="#c34" x="442.90" y="191.95"/><use href="#c34" x="225.90" y="221.55"/><use href="#c82" x="241.40" y="221.55"/><use href="#c34" x="256.90" y="221.55"/><use href="#c34" x="225.90" y="251.14"/><use href="#c71" x="241.40" y="251.14"/><use href="#c34" x="256.90" y="251.14"/><use href="#c34" x="225.90" y="280.73"/><use href="#c66" x="241.40" y="280.73"/><use href="#c34" x="256.90" y="280.73"/><use href="#c34" x="225.90" y="310.32"/><use href="#c120" x="241.40" y="310.32"/><use href="#c34" x="256.90" y="310.32"/><use href="#c34" x="225.90" y="339.91"/><use href="#c121" x="241.40" y="339.91"/><use href="#c34" x="256.90" y="339.91"/><use href="#c34" x="225.90" y="369.51"/><use href="#c112" x="241.40" y="369.51"/><use href="#c114" x="256.90" y="369.51"/><use href="#c111" x="272.40" y="369.51"/><use href="#c118" x="287.90" y="369.51"/><use href="#c105" x="303.40" y="369.51"/><use href="#c110" x="318.90" y="369.51"/><use href="#c99" x="334.40" y="369.51"/><use href="#c101" x="349.90" y="369.51"/><use href="#c95" x="365.40" y="369.51"/><use href="#c116" x="380.90" y="369.51"/><use href="#c101" x="396.40" y="369.51"/><use href="#c114" x="411.90" y="369.51"/><use href="#c114" x="427.40" y="369.51"/><use href="#c97" x="442.90" y="369.51"/><use href="#c105" x="458.40" y="369.51"/><use href="#c110" x="473.90" y="369.51"/><use href="#c34" x="489.40" y="369.51"/><use href="#c34" x="163.90" y="428.69"/><use href="#c80" x="179.40" y="428.69"/><use href="#c82" x="194.90" y="428.69"/><use href="#c86" x="210.40" y="428.69"/><use href="#c48" x="225.90" y="428.69"/><use href="#c48" x="241.40" y="428.69"/><use href="#c48" x="256.90" y="428.69"/><use href="#c48" x="272.40" y="428.69"/><use href="#c48" x="287.90" y="428.69"/><use href="#c50" x="303.40" y="428.69"/><use href="#c34" x="318.90" y="428.69"/><use href="#c34" x="225.90" y="458.35"/><use href="#c112" x="241.40" y="458.35"/><use href="#c114" x="256.90" y="458.35"/><use href="#c111" x="272.40" y="458.35"/><use href="#c118" x="287.90" y="458.35"/><use href="#c105" x="303.40" y="458.35"/><use href="#c110" x="318.90" y="458.35"/><use href="#c99" x="334.40" y="458.35"/><use href="#c101" x="349.90" y="458.35"/><use href="#c95" x="365.40" y="458.35"/><use href="#c116" x="380.90" y="458.35"/><use href="#c121" x="396.40" y="458.35"/><use href="#c112" x="411.90" y="458.35"/><use href="#c101" x="427.40" y="458.35"/><use href="#c34" x="442.90" y="458.35"/><use href="#c34" x="225.90" y="488.01"/><use href="#c82" x="241.40" y="488.01"/><use href="#c34" x="256.90" y="488.01"/><use href="#c34" x="225.90" y="517.67"/><use href="#c71" x="241.40" y="517.67"/><use href="#c34" x="256.90" y="517.67"/><use href="#c34" x="225.90" y="547.33"/><use href="#c66" x="241.40" y="547.33"/><use href="#c34" x="256.90" y="547.33"/><use href="#c34" x="225.90" y="576.99"/><use href="#c120" x="241.40" y="576.99"/><use href="#c34" x="256.90" y="576.99"/><use href="#c34" x="225.90" y="606.64"/><use href="#c121" x="241.40" y="606.64"/><use href="#c34" x="256.90" y="606.64"/><use href="#c34" x="225.90" y="636.30"/><use href="#c112" x="241.40" y="636.30"/><use href="#c114" x="256.90" y="636.30"/><use href="#c111" x="272.40" y="636.30"/><use href="#c118" x="287.90" y="636.30"/><use href="#c105" x="303.40" y="636.30"/><use href="#c110" x="318.90" y="636.30"/><use href="#c99" x="334.40" y="636.30"/><use href="#c101" x="349.90" y="636.30"/><use href="#c95" x="365.40" y="636.30"/><use href="#c116" x="380.90" y="636.30"/><use href="#c101" x="396.40" y="636.30"/><use href="#c114" x="411.90" y="636.30"/><use href="#c114" x="427.40" y="636.30"/><use href="#c97" x="442.90" y="636.30"/><use href="#c105" x="458.40" y="636.30"/><use href="#c110" x="473.90" y="636.30"/><use href="#c34" x="489.40" y="636.30"/><use href="#c34" x="163.90" y="695.62"/><use href="#c80" x="179.40" y="695.62"/><use href="#c82" x="194.90" y="695.62"/><use href="#c86" x="210.40" y="695.62"/><use href="#c48" x="225.90" y="695.62"/><use href="#c48" x="241.40" y="695.62"/><use href="#c48" x="256.90" y="695.62"/><use href="#c48" x="272.40" y="695.62"/><use href="#c48" x="287.90" y="695.62"/><use href="#c51" x="303.40" y="695.62"/><use href="#c34" x="318.90" y="695.62"/><use href="#c34" x="225.90" y="725.28"/><use href="#c112" x="241.40" y="725.28"/><use href="#c114" x="256.90" y="725.28"/><use href="#c111" x="272.40" y="725.28"/><use href="#c118" x="287.90" y="725.28"/><use href="#c105" x="303.40" y="725.28"/><use href="#c110" x="318.90" y="725.28"/><use href="#c99" x="334.40" y="725.28"/><use href="#c101" x="349.90" y="725.28"/><use href="#c95" x="365.40" y="725.28"/><use href="#c116" x="380.90" y="725.28"/><use href="#c121" x="396.40" y="725.28"/><use href="#c112" x="411.90" y="725.28"/><use href="#c101" x="427.40" y="725.28"/><use href="#c34" x="442.90" y="725.28"/><use href="#c34" x="225.90" y="754.87"/><use href="#c82" x="241.40" y="754.87"/><use href="#c34" x="256.90" y="754.87"/><use href="#c34" x="225.90" y="784.45"/><use href="#c71" x="241.40" y="784.45"/><use href="#c34" x="256.90" y="784.45"/><use href="#c34" x="225.90" y="814.03"/><use href="#c66" x="241.40" y="814.03"/><use href="#c34" x="256.90" y="814.03"/><use href="#c34" x="225.90" y="843.62"/><use href="#c120" x="241.40" y="843.62"/><use href="#c34" x="256.90" y="843.62"/><use href="#c34" x="225.90" y="873.20"/><use href="#c121" x="241.40" y="873.20"/><use href="#c34" x="256.90" y="873.20"/><use href="#c34" x="225.90" y="902.79"/><use href="#c112" x="241.40" y="902.79"/><use href="#c114" x="256.90" y="902.79"/><use href="#c111" x="272.40" y="902.79"/><use href="#c118" x="287.90" y="902.79"/><use href="#c105" x="303.40" y="902.79"/><use href="#c110" x="318.90" y="902.79"/><use href="#c99" x="334.40" y="902.79"/><use href="#c101" x="349.90" y="902.79"/><use href="#c95" x="365.40" y="902.79"/><use href="#c116" x="380.90" y="902.79"/><use href="#c101" x="396.40" y="902.79"/><use href="#c114" x="411.90" y="902.79"/><use href="#c114" x="427.40" y="902.79"/><use href="#c97" x="442.90" y="902.79"/><use href="#c105" x="458.40" y="902.79"/><use href="#c110" x="473.90" y="902.79"/><use href="#c34" x="489.40" y="902.79"/><use href="#c34" x="163.90" y="961.96"/><use href="#c80" x="179.40" y="961.96"/><use href="#c82" x="194.90" y="961.96"/><use href="#c86" x="210.40" y="961.96"/><use href="#c48" x="225.90" y="961.96"/><use href="#c48" x="241.40" y="961.96"/><use href="#c48" x="256.90" y="961.96"/><use href="#c48" x="272.40" y="961.96"/><use href="#c48" x="287.90" y="961.96"/><use href="#c52" x="303.40" y="961.96"/><use href="#c34" x="318.90" y="961.96"/><use href="#c34" x="225.90" y="991.54"/><use href="#c112" x="241.40" y="991.54"/><use href="#c114" x="256.90" y="991.54"/><use href="#c111" x="272.40" y="991.54"/><use href="#c118" x="287.90" y="991.54"/><use href="#c105" x="303.40" y="991.54"/><use href="#c110" x="318.90" y="991.54"/><use href="#c99" x="334.40" y="991.54"/><use href="#c101" x="349.90" y="991.54"/><use href="#c95" x="365.40" y="991.54"/><use href="#c116" x="380.90" y="991.54"/><use href="#c121" x="396.40" y="991.54"/><use href="#c112" x="411.90" y="991.54"/><use href="#c101" x="427.40" y="991.54"/><use href="#c34" x="442.90" y="991.54"/><use href="#c34" x="225.90" y="1021.13"/><use href="#c82" x="241.40" y="1021.13"/><use href="#c34" x="256.90" y="1021.13"/><use href="#c34" x="225.90" y="1050.71"/><use href="#c71" x="241.40" y="1050.71"/><use href="#c34" x="256.90" y="1050.71"/><use href="#c34" x="225.90" y="1080.30"/><use href="#c66" x="241.40" y="1080.30"/><use href="#c34" x="256.90" y="1080.30"/><use href="#c34" x="225.90" y="1109.88"/><use href="#c120" x="241.40" y="1109.88"/><use href="#c34" x="256.90" y="1109.88"/></g>
<g stroke="#000000" fill="#000000" stroke-width="1.35" stroke-linejoin="round"><use href="#c58" x="334.40" y="162.36"/><use href="#c123" x="365.40" y="162.36"/><use href="#c58" x="458.40" y="191.95"/><use href="#c44" x="582.40" y="191.95"/><use href="#c58" x="272.40" y="221.55"/><use href="#c44" x="334.40" y="221.55"/><use href="#c58" x="272.40" y="251.14"/><use href="#c44" x="349.90" y="251.14"/><use href="#c58" x="272.40" y="280.73"/><use href="#c44" x="349.90" y="280.73"/><use href="#c58" x="272.40" y="310.32"/><use href="#c44" x="411.90" y="310.32"/><use href="#c58" x="272.40" y="339.91"/><use href="#c44" x="396.40" y="339.91"/><use href="#c58" x="504.90" y="369.51"/><use href="#c125" x="163.90" y="399.10"/><use href="#c44" x="179.40" y="399.10"/><use href="#c58" x="334.40" y="428.69"/><use href="#c123" x="365.40" y="428.69"/><use href="#c58" x="458.40" y="458.35"/><use href="#c44" x="582.40" y="458.35"/><use href="#c58" x="272.40" y="488.01"/><use href="#c44" x="334.40" y="488.01"/><use href="#c58" x="272.40" y="517.67"/><use href="#c44" x="349.90" y="517.67"/><use href="#c58" x="272.40" y="547.33"/><use href="#c44" x="349.90" y="547.33"/><use href="#c58" x="272.40" y="576.99"/><use href="#c44" x="411.90" y="576.99"/><use href="#c58" x="272.40" y="606.64"/><use href="#c44" x="396.40" y="606.64"/><use href="#c58" x="504.90" y="636.30"/><use href="#c125" x="163.90" y="665.96"/><use href="#c44" x="179.40" y="665.96"/><use href="#c58" x="334.40" y="695.62"/><use href="#c123" x="365.40" y="695.62"/><use href="#c58" x="458.40" y="725.28"/><use href="#c44" x="582.40" y="725.28"/><use href="#c58" x="272.40" y="754.87"/><use href="#c44" x="334.40" y="754.87"/><use href="#c58" x="272.40" y="784.45"/><use href="#c44" x="334.40" y="784.45"/><use href="#c58" x="272.40" y="814.03"/><use href="#c44" x="349.90" y="814.03"/><use href="#c58" x="272.40" y="843.62"/><use href="#c44" x="396.40" y="843.62"/><use href="#c58" x="272.40" y="873.20"/><use href="#c44" x="396.40" y="873.20"/><use href="#c58" x="504.90" y="902.79"/><use href="#c125" x="163.90" y="932.38"/><use href="#c44" x="179.40" y="932.38"/><use href="#c58" x="334.40" y="961.96"/><use href="#c123" x="365.40" y="961.96"/><use href="#c58" x="458.40" y="991.54"/><use href="#c44" x="582.40" y="991.54"/><use href="#c58" x="272.40" y="1021.13"/><use href="#c44" x="334.40" y="1021.13"/><use href="#c58" x="272.40" y="1050.71"/><use href="#c44" x="349.90" y="1050.71"/><use href="#c58" x="272.40" y="1080.30"/><use href="#c44" x="349.90" y="1080.30"/><use href="#c58" x="272.40" y="1109.88"/><use href="#c44" x="396.40" y="1109.88"/></g>
<g stroke="#7e1212" fill="#7e1212" stroke-width="1.35" stroke-linejoin="round"><use href="#c34" x="489.40" y="191.95"/><use href="#c108" x="504.90" y="191.95"/><use href="#c97" x="520.40" y="191.95"/><use href="#c107" x="535.90" y="191.95"/><use href="#c101" x="551.40" y="191.95"/><use href="#c34" x="566.90" y="191.95"/><use href="#c34" x="535.90" y="369.51"/><use href="#c108" x="551.40" y="369.51"/><use href="#c97" x="566.90" y="369.51"/><use href="#c107" x="582.40" y="369.51"/><use href="#c101" x="597.90" y="369.51"/><use href="#c115" x="613.40" y="369.51"/><use href="#c34" x="628.90" y="369.51"/><use href="#c34" x="489.40" y="458.35"/><use href="#c108" x="504.90" y="458.35"/><use href="#c97" x="520.40" y="458.35"/><use href="#c107" x="535.90" y="458.35"/><use href="#c101" x="551.40" y="458.35"/><use href="#c34" x="566.90" y="458.35"/><use href="#c34" x="535.90" y="636.30"/><use href="#c108" x="551.40" y="636.30"/><use href="#c97" x="566.90" y="636.30"/><use href="#c107" x="582.40" y="636.30"/><use href="#c101" x="597.90" y="636.30"/><use href="#c115" x="613.40" y="636.30"/><use href="#c34" x="628.90" y="636.30"/><use href="#c34" x="489.40" y="725.28"/><use href="#c108" x="504.90" y="725.28"/><use href="#c97" x="520.40" y="725.28"/><use href="#c107" x="535.90" y="725.28"/><use href="#c101" x="551.40" y="725.28"/><use href="#c34" x="566.90" y="725.28"/><use href="#c34" x="535.90" y="902.79"/><use href="#c108" x="551.40" y="902.79"/><use href="#c97" x="566.90" y="902.79"/><use href="#c107" x="582.40" y="902.79"/><use href="#c101" x="597.90" y="902.79"/><use href="#c115" x="613.40" y="902.79"/><use href="#c34" x="628.90" y="902.79"/><use href="#c34" x="489.40" y="991.54"/><use href="#c108" x="504.90" y="991.54"/><use href="#c97" x="520.40" y="991.54"/><use href="#c107" x="535.90" y="991.54"/><use href="#c101" x="551.40" y="991.54"/><use href="#c34" x="566.90" y="991.54"/></g>
<g stroke="#f8862a" fill="#f8862a" stroke-width="1.35" stroke-linejoin="round"><use href="#c51" x="303.40" y="221.55"/><use href="#c55" x="318.90" y="221.55"/><use href="#c49" x="303.40" y="251.14"/><use href="#c51" x="318.90" y="251.14"/><use href="#c49" x="334.40" y="251.14"/><use href="#c49" x="303.40" y="280.73"/><use href="#c55" x="318.90" y="280.73"/><use href="#c53" x="334.40" y="280.73"/><use href="#c49" x="303.40" y="310.32"/><use href="#c50" x="318.90" y="310.32"/><use href="#c51" x="334.40" y="310.32"/><use href="#c49" x="349.90" y="310.32"/><use href="#c46" x="365.40" y="310.32"/><use href="#c56" x="380.90" y="310.32"/><use href="#c50" x="396.40" y="310.32"/><use href="#c50" x="303.40" y="339.91"/><use href="#c49" x="318.90" y="339.91"/><use href="#c57" x="334.40" y="339.91"/><use href="#c46" x="349.90" y="339.91"/><use href="#c51" x="365.40" y="339.91"/><use href="#c55" x="380.90" y="339.91"/><use href="#c54" x="303.40" y="488.01"/><use href="#c55" x="318.90" y="488.01"/><use href="#c49" x="303.40" y="517.67"/><use href="#c48" x="318.90" y="517.67"/><use href="#c54" x="334.40" y="517.67"/><use href="#c49" x="303.40" y="547.33"/><use href="#c49" x="318.90" y="547.33"/><use href="#c48" x="334.40" y="547.33"/><use href="#c49" x="303.40" y="576.99"/><use href="#c49" x="318.90" y="576.99"/><use href="#c57" x="334.40" y="576.99"/><use href="#c49" x="349.90" y="576.99"/><use href="#c46" x="365.40" y="576.99"/><use href="#c53" x="380.90" y="576.99"/><use href="#c53" x="396.40" y="576.99"/><use href="#c50" x="303.40" y="606.64"/><use href="#c48" x="318.90" y="606.64"/><use href="#c52" x="334.40" y="606.64"/><use href="#c46" x="349.90" y="606.64"/><use href="#c53" x="365.40" y="606.64"/><use href="#c49" x="380.90" y="606.64"/><use href="#c54" x="303.40" y="754.87"/><use href="#c52" x="318.90" y="754.87"/><use href="#c56" x="303.40" y="784.45"/><use href="#c56" x="318.90" y="784.45"/><use href="#c49" x="303.40" y="814.03"/><use href="#c49" x="318.90" y="814.03"/><use href="#c55" x="334.40" y="814.03"/><use href="#c49" x="303.40" y="843.62"/><use href="#c49" x="318.90" y="843.62"/><use href="#c56" x="334.40" y="843.62"/><use href="#c52" x="349.90" y="843.62"/><use href="#c46" x="365.40" y="843.62"/><use href="#c48" x="380.90" y="843.62"/><use href="#c50" x="303.40" y="873.20"/><use href="#c49" x="318.90" y="873.20"/><use href="#c48" x="334.40" y="873.20"/><use href="#c46" x="349.90" y="873.20"/><use href="#c49" x="365.40" y="873.20"/><use href="#c50" x="380.90" y="873.20"/><use href="#c53" x="303.40" y="1021.13"/><use href="#c56" x="318.90" y="1021.13"/><use href="#c49" x="303.40" y="1050.71"/><use href="#c55" x="318.90" y="1050.71"/><use href="#c52" x="334.40" y="1050.71"/><use href="#c49" x="303.40" y="1080.30"/><use href="#c56" x="318.90" y="1080.30"/><use href="#c56" x="334.40" y="1080.30"/><use href="#c49" x="303.40" y="1109.88"/><use href="#c49" x="318.90" y="1109.88"/><use href="#c56" x="334.40" y="1109.88"/><use href="#c48" x="349.90" y="1109.88"/><use href="#c46" x="365.40" y="1109.88"/><use href="#c48" x="380.90" y="1109.88"/></g>
</svg>
</div>
</div>
<div class="a" style="left:2.5px;top:112px;width:1.2px;height:990px;background:#8c8c8c"></div>
<div class="a" id="edbot"></div>
<div class="a" style="left:0;top:1120px;width:8px;height:8px;background:#1e2226"></div>
<div class="a" id="status"></div>
<div class="st" style="left:2px">JSON file</div>
<div class="st" style="left:381px">length: 667,013</div><div class="st" style="left:498px">lines: 29,909</div>
<div class="st" style="left:647px">Ln: 1</div><div class="st" style="left:694px">Col: 1</div><div class="st" style="left:747px">Pos: 1</div>
<div class="st" style="left:961px;letter-spacing:-0.25px">Windows (CR LF)</div>
<div class="st" style="left:1094px">UTF-8</div>
<div class="st" style="left:1240px">IN</div>

<div class="a" style="left:378px;top:1105px;width:1px;height:23px;background:#d8d8d8"></div>
<div class="a" style="left:644px;top:1105px;width:1px;height:23px;background:#d8d8d8"></div>
<div class="a" style="left:958px;top:1105px;width:1px;height:23px;background:#d8d8d8"></div>
<div class="a" style="left:1091px;top:1105px;width:1px;height:23px;background:#d8d8d8"></div>
<div class="a" style="left:1236px;top:1105px;width:1px;height:23px;background:#d8d8d8"></div>
<svg class="a" style="left:1266px;top:1116px" width="14" height="12"><g fill="#a8a8a8"><rect x="11" y="6" width="1.8" height="1.8"/><rect x="7.2" y="9.5" width="1.8" height="1.8"/><rect x="11" y="9.5" width="1.8" height="1.8"/></g></svg>
<div class="a" id="lborder"></div>
</body></html>
